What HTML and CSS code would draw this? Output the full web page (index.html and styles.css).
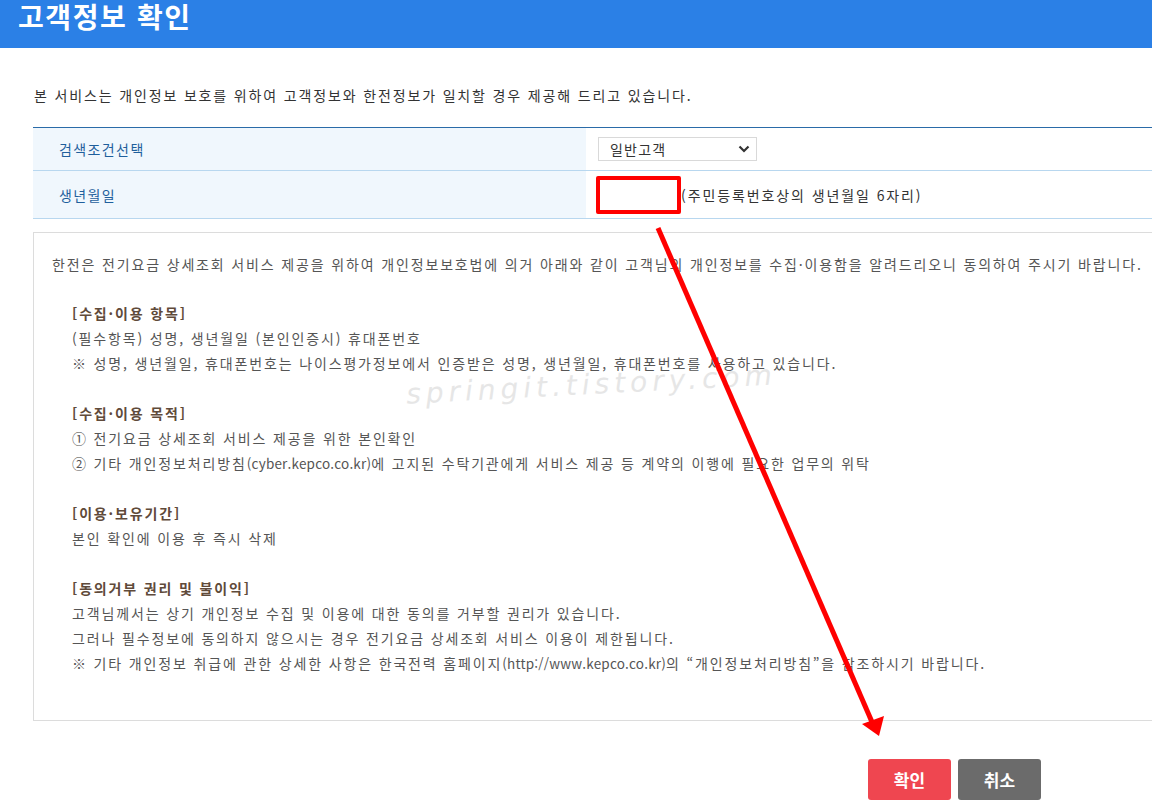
FILE: index.html
```html
<!DOCTYPE html>
<html lang="ko">
<head>
<meta charset="utf-8">
<title>고객정보 확인</title>
<link rel="stylesheet" href="styles.css">
</head>
<body>
<header class="top">
  <h1 class="title">고객정보 확인</h1>
</header>
<main class="page">
  <p class="intro">본 서비스는 개인정보 보호를 위하여 고객정보와 한전정보가 일치할 경우 제공해 드리고 있습니다.</p>
  <div class="form">
    <div class="row row-first">
      <div class="label">검색조건선택</div>
      <div class="value">
        <div class="select">
          <span>일반고객</span>
          <svg class="chev" width="12" height="8" viewBox="0 0 12 8"><path d="M1.5 1.5 L6 6 L10.5 1.5" fill="none" stroke="#333" stroke-width="2.2"/></svg>
        </div>
      </div>
    </div>
    <div class="row row-second">
      <div class="label">생년월일</div>
      <div class="value">
        <div class="birth"></div>
        <span class="hint">(주민등록번호상의 생년월일 6자리)</span>
      </div>
    </div>
  </div>
  <div class="terms">
    <p class="lead">한전은 전기요금 상세조회 서비스 제공을 위하여 개인정보보호법에 의거 아래와 같이 고객님의 개인정보를 수집·이용함을 알려드리오니 동의하여 주시기 바랍니다.</p>
    <div class="sec">
      <p class="sec-h">[수집·이용 항목]</p>
      <p>(필수항목) 성명, 생년월일 (본인인증시) 휴대폰번호</p>
      <p>※ 성명, 생년월일, 휴대폰번호는 나이스평가정보에서 인증받은 성명, 생년월일, 휴대폰번호를 사용하고 있습니다.</p>
    </div>
    <div class="sec">
      <p class="sec-h">[수집·이용 목적]</p>
      <p>① 전기요금 상세조회 서비스 제공을 위한 본인확인</p>
      <p>② 기타 개인정보처리방침<span class="lat">(cyber.kepco.co.kr)</span>에 고지된 수탁기관에게 서비스 제공 등 계약의 이행에 필요한 업무의 위탁</p>
    </div>
    <div class="sec">
      <p class="sec-h">[이용·보유기간]</p>
      <p>본인 확인에 이용 후 즉시 삭제</p>
    </div>
    <div class="sec">
      <p class="sec-h">[동의거부 권리 및 불이익]</p>
      <p>고객님께서는 상기 개인정보 수집 및 이용에 대한 동의를 거부할 권리가 있습니다.</p>
      <p>그러나 필수정보에 동의하지 않으시는 경우 전기요금 상세조회 서비스 이용이 제한됩니다.</p>
      <p>※ 기타 개인정보 취급에 관한 상세한 사항은 한국전력 홈페이지<span class="lat">(http://www.kepco.co.kr)</span>의 “개인정보처리방침”을 참조하시기 바랍니다.</p>
    </div>
  </div>
  <div class="actions">
    <button class="btn btn-ok">확인</button>
    <button class="btn btn-cancel">취소</button>
  </div>
</main>
<div class="watermark">springit.tistory.com</div>
<svg class="arrow" width="1152" height="805" viewBox="0 0 1152 805">
  <line x1="658" y1="228" x2="872" y2="722" stroke="#ff0000" stroke-width="5"/>
  <polygon points="862,724 884,716 879,736" fill="#ff0000"/>
</svg>
</body>
</html>
```

FILE: styles.css
```css
html, body {
  margin: 0;
  padding: 0;
  overflow: hidden;
  background: #fff;
}
body {
  width: 1152px;
  height: 805px;
  font-family: "Noto Sans CJK KR", "Noto Sans", sans-serif;
  color: #333;
  position: relative;
}
p { margin: 0; }

.top {
  height: 48px;
  background: #2b80e6;
  padding-left: 18px;
  box-sizing: border-box;
}
.title {
  margin: 0;
  font-size: 28px;
  font-weight: bold;
  letter-spacing: 1.6px;
  color: #fff;
  line-height: 33px;
}

.page {
  width: 1160px;
  padding-left: 33px;
  box-sizing: border-box;
}
.intro {
  margin-top: 37px;
  padding-left: 1px;
  font-size: 14px;
  line-height: 20px;
  letter-spacing: 1.85px;
  color: #333;
}

.form {
  margin-top: 22px;
  border-top: 1px solid #2a6ba8;
}
.row {
  display: flex;
  border-bottom: 1px solid #b8d7ef;
}
.row-first { height: 42px; }
.row-second { height: 47px; }
.label {
  width: 553px;
  flex: none;
  background: #f0f7fd;
  padding-left: 26px;
  box-sizing: border-box;
  display: flex;
  align-items: center;
  font-size: 14px;
  letter-spacing: 1.4px;
  color: #1f5f9c;
}
.value {
  flex: 1;
  display: flex;
  align-items: center;
  padding-left: 12px;
}
.select {
  width: 159px;
  height: 24px;
  border: 1px solid #d9d9d9;
  box-sizing: border-box;
  display: flex;
  align-items: center;
  justify-content: space-between;
  padding: 0 6px 0 11px;
  font-size: 14px;
  letter-spacing: 1.2px;
  color: #333;
}
.birth {
  width: 77px;
  height: 30px;
  border: 4px solid #ff0000;
  border-radius: 2px;
  margin-left: -2px;
  background: #fff;
}
.hint {
  font-size: 14px;
  letter-spacing: 1.9px;
  color: #333;
}

.terms {
  margin-top: 13px;
  height: 489px;
  border: 1px solid #dcdcdc;
  box-sizing: border-box;
  padding: 19px 0 0 18px;
  font-size: 14px;
  line-height: 25px;
  letter-spacing: 1.85px;
  color: #555;
  white-space: nowrap;
}
.lat {
  letter-spacing: 0.2px;
  font-size: 13.5px;
}
.lead { margin-bottom: 24px; }
.sec {
  padding-left: 20px;
  margin-bottom: 25px;
}
.sec-h {
  font-weight: bold;
  color: #5f4a3a;
}

.actions {
  margin-top: 38px;
  display: flex;
  gap: 7px;
  padding-left: 835px;
}
.btn {
  width: 83px;
  height: 41px;
  border: none;
  border-radius: 3px;
  font-family: "Noto Sans CJK KR", "Noto Sans", sans-serif;
  font-size: 17px;
  font-weight: bold;
  color: #fff;
  padding: 0;
}
.btn-ok { background: #ef4650; }
.btn-cancel { background: #6b6b6b; }

.watermark {
  position: absolute;
  left: 406px;
  top: 368px;
  font-family: "DejaVu Sans", sans-serif;
  font-style: italic;
  font-size: 28px;
  letter-spacing: 5px;
  color: #e6e6e6;
  transform: rotate(-3deg);
  pointer-events: none;
}
.arrow {
  position: absolute;
  left: 0;
  top: 0;
  pointer-events: none;
}
```
